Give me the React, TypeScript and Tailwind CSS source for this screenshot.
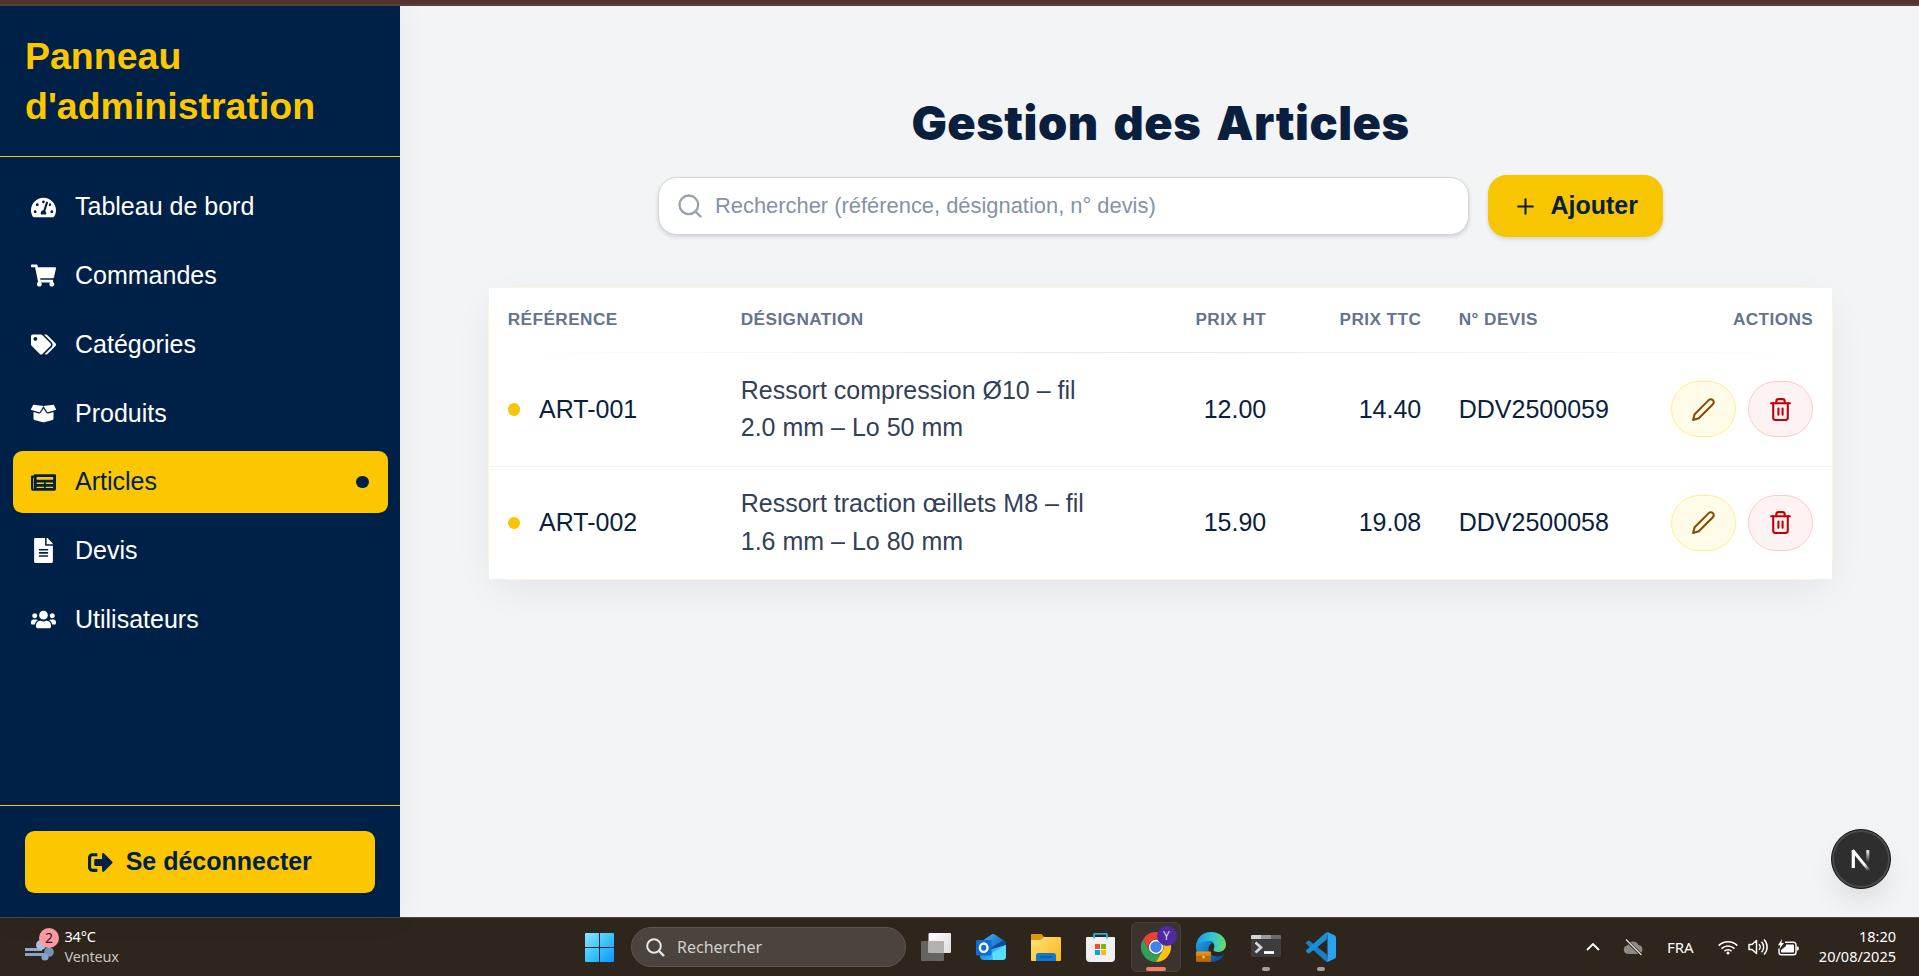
import type { ComponentType, ReactNode } from "react";
import {
  FaBoxOpen,
  FaFileAlt,
  FaNewspaper,
  FaShoppingCart,
  FaSignOutAlt,
  FaTachometerAlt,
  FaTags,
  FaUsers,
} from "react-icons/fa";
import { FiEdit2, FiPlus, FiSearch, FiTrash2 } from "react-icons/fi";

type NavItem = { label: string; icon: ComponentType<{ className?: string }>; active?: boolean };

const navItems: NavItem[] = [
  { label: "Tableau de bord", icon: FaTachometerAlt },
  { label: "Commandes", icon: FaShoppingCart },
  { label: "Catégories", icon: FaTags },
  { label: "Produits", icon: FaBoxOpen },
  { label: "Articles", icon: FaNewspaper, active: true },
  { label: "Devis", icon: FaFileAlt },
  { label: "Utilisateurs", icon: FaUsers },
];

const articles = [
  {
    ref: "ART-001",
    designation: "Ressort compression Ø10 – fil 2.0 mm – Lo 50 mm",
    ht: "12.00",
    ttc: "14.40",
    devis: "DDV2500059",
  },
  {
    ref: "ART-002",
    designation: "Ressort traction œillets M8 – fil 1.6 mm – Lo 80 mm",
    ht: "15.90",
    ttc: "19.08",
    devis: "DDV2500058",
  },
];

function Sidebar() {
  return (
    <aside className="z-10 flex w-[400px] shrink-0 flex-col bg-[#002147] text-white shadow-[0_0_30px_rgba(0,0,0,0.06)]">
      <div className="border-b border-[#fdc700] p-[25px]">
        <h1 className="text-[37.5px] leading-[50px] font-bold text-[#fdc700]">
          Panneau d'administration
        </h1>
      </div>
      <nav className="flex flex-1 flex-col gap-[6.25px] px-[12.5px] pt-[18.75px]">
        {navItems.map(({ label, icon: Icon, active }) => (
          <a
            key={label}
            className={
              active
                ? "flex h-[62.5px] items-center rounded-[9.4px] bg-[#fdc700] px-[18.75px] text-[#002147]"
                : "flex h-[62.5px] items-center rounded-[9.4px] px-[18.75px] text-white"
            }
          >
            <Icon className="size-[25px]" />
            <span className="ml-[18.75px] text-[25px] leading-[37.5px]">{label}</span>
            {active && <span className="ml-auto size-[12.5px] rounded-full bg-[#002147]" />}
          </a>
        ))}
      </nav>
      <div className="border-t border-[#fdc700] px-[25px] pt-[25px] pb-[24px]">
        <button className="flex h-[62px] w-full items-center justify-center gap-[12.5px] rounded-[9.4px] bg-[#fdc700] text-[25px] font-bold text-[#002147]">
          <FaSignOutAlt className="size-[25px]" />
          Se déconnecter
        </button>
      </div>
    </aside>
  );
}

function Toolbar() {
  return (
    <div className="flex items-center justify-center gap-[19px]">
      <div className="flex h-[58px] w-[811px] items-center rounded-[18.75px] border border-[#d1d5dc] bg-white pl-[17px] shadow-[0_2px_4px_rgba(0,0,0,0.14)]">
        <FiSearch className="size-[28px] text-[#99a1af]" />
        <span className="ml-[11px] text-[21.9px] text-[#8592a6]">
          Rechercher (référence, désignation, n° devis)
        </span>
      </div>
      <button className="flex h-[62px] w-[175px] items-center gap-[12.5px] rounded-[18.75px] bg-[#f7c600] pl-[25px] text-[25px] font-bold text-[#0a1f3d] shadow-[0_2px_4px_rgba(0,0,0,0.14)]">
        <FiPlus className="size-[25px]" />
        Ajouter
      </button>
    </div>
  );
}

function ArticlesTable() {
  const th = "px-[18.75px] align-top pt-[18px]";
  const td = "px-[18.75px] h-[113px] text-[25px]";
  return (
    <div className="mx-auto w-[1345px] rounded-[25px] border border-[#fef6d6] shadow-[0_12px_36px_rgba(0,0,0,0.06)]">
      <div className="bg-white">
        <table className="w-full table-fixed border-collapse text-[#0a1f3d]">
          <colgroup>
            <col className="w-[233px]" />
            <col className="w-[400px]" />
            <col className="w-[163px]" />
            <col className="w-[155px]" />
            <col className="w-[210px]" />
            <col />
          </colgroup>
          <thead>
            <tr className="h-[65px] bg-[linear-gradient(to_right,transparent,#e5e7eb,transparent)] bg-[length:100%_1px] bg-[position:0_64px] bg-no-repeat text-left text-[17.2px] leading-[26px] font-bold tracking-[0.43px] text-[#62748e] uppercase">
              <th className={th}>Référence</th>
              <th className={th}>Désignation</th>
              <th className="px-[18.75px] pt-[18px] text-right align-top">Prix HT</th>
              <th className="px-[18.75px] pt-[18px] text-right align-top">Prix TTC</th>
              <th className={th}>N° Devis</th>
              <th className="px-[18.75px] pt-[18px] text-right align-top">Actions</th>
            </tr>
          </thead>
          <tbody>
            {articles.map((a, i) => (
              <tr key={a.ref} className={i > 0 ? "border-t border-[#f3f4f6]" : ""}>
                <td className={td}>
                  <div className="flex items-center gap-[18.75px]">
                    <span className="size-[12.5px] rounded-full bg-[#f7c600]" />
                    {a.ref}
                  </div>
                </td>
                <td className="px-[18.75px] text-[25px] leading-[37.5px] text-[#314158]">
                  {a.designation}
                </td>
                <td className="px-[18.75px] text-right text-[25px]">{a.ht}</td>
                <td className="px-[18.75px] text-right text-[25px]">{a.ttc}</td>
                <td className={td}>{a.devis}</td>
                <td className="pr-[18.75px]">
                  <div className="flex justify-end gap-[12px]">
                    <button className="flex h-[56px] w-[65px] items-center justify-center rounded-full border border-[#fff085] bg-[#fefce8] text-[#894b00]">
                      <FiEdit2 className="size-[25px]" />
                    </button>
                    <button className="flex h-[56px] w-[65px] items-center justify-center rounded-full border border-[#ffc9c9] bg-[#fef2f2] text-[#c10007]">
                      <FiTrash2 className="size-[25px]" />
                    </button>
                  </div>
                </td>
              </tr>
            ))}
          </tbody>
        </table>
      </div>
    </div>
  );
}

function DevBadge() {
  return (
    <div className="absolute right-[28px] bottom-[28px] flex size-[60px] items-center justify-center rounded-full border border-[#171717] bg-[#2e2e2e] shadow-[inset_0_0_0_2px_#4a4a4a,0_16px_32px_-8px_rgba(0,0,0,0.14)]">
      <svg viewBox="0 0 24 26" className="h-[26px] w-[24px]" fill="none">
        <defs>
          <linearGradient id="nDiag" x1="10" y1="12" x2="20" y2="25" gradientUnits="userSpaceOnUse">
            <stop offset="0.5" stopColor="#fff" />
            <stop offset="1" stopColor="#fff" stopOpacity="0" />
          </linearGradient>
          <linearGradient id="nStem" x1="18" y1="4" x2="18" y2="16" gradientUnits="userSpaceOnUse">
            <stop stopColor="#fff" />
            <stop offset="1" stopColor="#fff" stopOpacity="0" />
          </linearGradient>
        </defs>
        <path d="M4.3 22V4.2" stroke="#fff" strokeWidth="3.2" />
        <path d="M3.6 4.2 20.2 24.6" stroke="url(#nDiag)" strokeWidth="3" />
        <path d="M18.8 4.2V16" stroke="url(#nStem)" strokeWidth="3" />
      </svg>
    </div>
  );
}

function AppSlot({ children, running }: { children: ReactNode; running?: boolean }) {
  return (
    <div className="relative flex h-[50px] w-[55px] items-center justify-center">
      {children}
      {running && <span className="absolute bottom-[1px] h-[4px] w-[8px] rounded-full bg-[#a39e99]" />}
    </div>
  );
}

function WindowsLogo() {
  return (
    <svg viewBox="0 0 29 29" className="size-[29px]">
      <defs>
        <linearGradient id="win" x1="0" y1="0" x2="29" y2="29" gradientUnits="userSpaceOnUse">
          <stop stopColor="#8fe3ff" />
          <stop offset="0.5" stopColor="#3cc4ff" />
          <stop offset="1" stopColor="#0a93ff" />
        </linearGradient>
      </defs>
      <path
        fill="url(#win)"
        d="M1 0h13v14H0V1a1 1 0 0 1 1-1ZM15 0h13a1 1 0 0 1 1 1v13H15ZM0 15h14v14H1a1 1 0 0 1-1-1ZM15 15h14v13a1 1 0 0 1-1 1H15Z"
      />
    </svg>
  );
}

function TaskViewIcon() {
  return (
    <svg viewBox="0 0 30 28" className="h-[28px] w-[30px]">
      <defs>
        <linearGradient id="tvFront" x1="8" y1="0" x2="30" y2="20" gradientUnits="userSpaceOnUse">
          <stop stopColor="#fff" />
          <stop offset="1" stopColor="#dcdcdc" />
        </linearGradient>
      </defs>
      <rect x="0" y="8" width="23" height="20" rx="1" fill="#666462" />
      <rect x="7.5" y="0" width="22.5" height="20" rx="1" fill="url(#tvFront)" />
      <rect x="7.5" y="8" width="15.5" height="12" fill="#b3b2b1" />
    </svg>
  );
}

function OutlookIcon() {
  return (
    <svg viewBox="0 0 30 28" className="h-[28px] w-[30px]">
      <defs>
        <linearGradient id="olFlap" x1="6" y1="2" x2="26" y2="20" gradientUnits="userSpaceOnUse">
          <stop stopColor="#42b5f5" />
          <stop offset="1" stopColor="#0a58b8" />
        </linearGradient>
        <linearGradient id="olBody" x1="6" y1="16" x2="30" y2="27" gradientUnits="userSpaceOnUse">
          <stop stopColor="#1c8ce8" />
          <stop offset="1" stopColor="#52dcff" />
        </linearGradient>
      </defs>
      <path fill="url(#olFlap)" d="M4 9.5 15.5 1.4a3 3 0 0 1 3.300 0L28.500 8a3 3 0 0 1 1.500 2.600V18L8 20H4Z" />
      <path fill="#0b4aa0" d="m13 16 15-9 2 3v4L14 22Z" />
      <path fill="url(#olBody)" d="m4 20 12-4 14-4v11a4 4 0 0 1-4 4H8a4 4 0 0 1-4-4Z" />
      <path fill="#55dfff" d="M16 20 30 12v11a4 4 0 0 1-4 4h-9Z" />
      <rect x="0" y="7" width="15.500" height="15.500" rx="1.500" fill="#0f6fd0" />
      <ellipse cx="7.700" cy="14.700" rx="3.800" ry="4.200" fill="none" stroke="#fff" strokeWidth="2.300" />
    </svg>
  );
}

function ExplorerIcon() {
  return (
    <svg viewBox="0 0 30 27" className="h-[27px] w-[30px]">
      <defs>
        <linearGradient id="fold" x1="4" y1="4" x2="28" y2="27" gradientUnits="userSpaceOnUse">
          <stop stopColor="#ffdf70" />
          <stop offset="1" stopColor="#fbb91b" />
        </linearGradient>
      </defs>
      <path fill="#dc9a0a" d="M1 0h9.500l3 3.500H29V8H0V1a1 1 0 0 1 1-1Z" />
      <path fill="url(#fold)" d="M0 6h9.500L13 3h16a1 1 0 0 1 1 1v22a1 1 0 0 1-1 1H1a1 1 0 0 1-1-1Z" />
      <path fill="#1079cd" d="M5 27v-5.500A2.500 2.500 0 0 1 7.500 19h15a2.500 2.500 0 0 1 2.500 2.500V27Z" />
      <path stroke="#07508f" strokeWidth="1.200" d="M8.500 23h13" />
    </svg>
  );
}

function StoreIcon() {
  return (
    <svg viewBox="0 0 29 29" className="size-[29px]">
      <path d="M8 5V1.800a1 1 0 0 1 1-1h11a1 1 0 0 1 1 1V5" fill="none" stroke="#25aee6" strokeWidth="1.800" />
      <path fill="#f0f0f0" d="M1 4h27a1 1 0 0 1 1 1v20a4 4 0 0 1-4 4H4a4 4 0 0 1-4-4V5a1 1 0 0 1 1-1Z" />
      <path d="M8 5.500V2M21 5.500V2" stroke="#25aee6" strokeWidth="1.800" />
      <path fill="#f25022" d="M9 11h5v5H9z" />
      <path fill="#7fba00" d="M15 11h5v5h-5z" />
      <path fill="#00a4ef" d="M9 17h5v5H9z" />
      <path fill="#ffb900" d="M15 17h5v5h-5z" />
    </svg>
  );
}

function ChromeIcon() {
  return (
    <div className="relative flex size-[50px] shrink-0 items-center justify-center rounded-[6px] border border-[#48413b] bg-[#3b332d]">
      <svg viewBox="0 0 48 48" className="size-[30px]">
        <path fill="#ea4335" d="M3.200 12A24 24 0 0 1 44.800 12H24a12 12 0 0 0-10.400 18Z" />
        <path fill="#34a053" d="M3.200 12A24 24 0 0 0 24 48L34.400 30A12 12 0 0 1 13.600 30Z" />
        <path fill="#fbc116" d="M44.800 12A24 24 0 0 1 24 48L34.400 30A12 12 0 0 0 24 12Z" />
        <circle cx="24" cy="24" r="11.500" fill="#fff" />
        <circle cx="24" cy="24" r="9.200" fill="#3f82f0" />
      </svg>
      <span className="absolute top-[3px] left-[25px] flex size-[20px] items-center justify-center rounded-full bg-[#5129a3] text-[12px] text-[#ddd6ec]">
        Y
      </span>
      <span className="absolute bottom-[0px] h-[4px] w-[20px] rounded-full bg-[#f47c64]" />
    </div>
  );
}

function EdgeIcon() {
  return (
    <svg viewBox="0 0 30 30" className="size-[30px]">
      <defs>
        <linearGradient id="edgeTop" x1="0" y1="12" x2="30" y2="14" gradientUnits="userSpaceOnUse">
          <stop stopColor="#1f95dc" />
          <stop offset="0.500" stopColor="#2fc2df" />
          <stop offset="1" stopColor="#6be05f" />
        </linearGradient>
        <linearGradient id="edgeBody" x1="0" y1="10" x2="20" y2="30" gradientUnits="userSpaceOnUse">
          <stop stopColor="#1c9fe8" />
          <stop offset="1" stopColor="#0d4f9e" />
        </linearGradient>
        <linearGradient id="brief" x1="0" y1="19" x2="0" y2="30" gradientUnits="userSpaceOnUse">
          <stop stopColor="#f59a14" />
          <stop offset="1" stopColor="#b05c04" />
        </linearGradient>
      </defs>
      <path fill="url(#edgeBody)" d="M0 15C2 7 12 7 16 11c-5 3-5 11 2 13 4 1.200 8 0 10.500-2C26 27 21 30 15 30 6 30 0 23 0 15Z" />
      <path fill="url(#edgeTop)" d="M0 15C0 6 6.500 0 15 0c9 0 15 6 15 12.500 0 5-4 7.500-8 7.500-3 0-5-1-4.500-2.500 2-3 1-8.500-5-8.500C6 9 1.500 12 0 15Z" />
      <rect x="0" y="19.500" width="15" height="10.500" rx="1" fill="url(#brief)" />
      <path d="M0 25h15" stroke="#8b4600" strokeWidth="0.700" />
      <circle cx="7.500" cy="25" r="1.300" fill="#ffd34a" />
    </svg>
  );
}

function TerminalIcon() {
  return (
    <svg viewBox="0 0 30 22" className="mb-[2px] h-[22px] w-[30px]">
      <rect width="30" height="22" rx="1.500" fill="#3c3c3c" />
      <path fill="#d4d4d4" d="M1 0h9v4H0V1a1 1 0 0 1 1-1Z" />
      <path fill="#9a9a9a" d="M10 0h10v4H10z" />
      <path fill="#6b6b6b" d="M20 0h9a1 1 0 0 1 1 1v3H20z" />
      <path d="m4.500 7.500 5.500 5-5.500 5" fill="none" stroke="#d9d9d9" strokeWidth="2.600" />
      <path d="M13 17.500h10" stroke="#fff" strokeWidth="2.800" />
    </svg>
  );
}

function VsCodeIcon() {
  return (
    <svg viewBox="0 0 30 30" className="size-[30px]">
      <path fill="#1c7fc4" d="m20.500 22.200-17-13.500a1.200 1.200 0 0 0-1.500 0L.4 10.200a1.200 1.200 0 0 0 0 1.800L20 29.500l2-1Z" />
      <path fill="#1a8fd8" d="m20.500 7.800-17 13.500a1.200 1.200 0 0 1-1.500 0L.4 19.800a1.200 1.200 0 0 1 0-1.800L20 .5l2 1Z" />
      <path fill="#2aa3ee" d="m22 29.800 6.500-3A2.500 2.500 0 0 0 30 24.500v-19a2.500 2.500 0 0 0-1.500-2.300L22 .2a2 2 0 0 0-2.200.3c.7-.5 1.700 0 1.700 1v27c0 1-1 1.500-1.700 1A2 2 0 0 0 22 29.800Z" />
    </svg>
  );
}

function WeatherWidget() {
  return (
    <div className="flex items-center pb-[3px]">
      <div className="relative h-[34px] w-[39.500px]">
        <svg viewBox="0 0 40 34" className="h-[34px] w-[40px]" fill="none">
          <path d="M0 20.500h17" stroke="#8ea9cd" strokeWidth="3" />
          <path d="M0 25.500h22" stroke="#87a3c9" strokeWidth="3" />
          <circle cx="16" cy="16" r="5" fill="#a9bfda" />
          <circle cx="24" cy="23" r="4.800" fill="#7292ba" />
          <circle cx="20" cy="28" r="3.600" fill="#86a3c8" />
        </svg>
        <span className="absolute top-[-1px] left-[14px] flex size-[20px] items-center justify-center rounded-full bg-[#ff99a4] text-[14px] text-[#2a1416]">
          2
        </span>
      </div>
      <div className="text-[14.500px] leading-[20px] tracking-[-0.2px]">
        <div className="text-white">34°C</div>
        <div className="text-[#c8c4c0]">Venteux</div>
      </div>
    </div>
  );
}

function SystemTray() {
  return (
    <div className="flex items-center text-white">
      <svg viewBox="0 0 14 8" className="h-[8px] w-[14px]" fill="none" stroke="#fff" strokeWidth="1.800">
        <path d="m1 7 6-6 6 6" />
      </svg>
      <svg viewBox="0 0 21 17" className="ml-[23px] h-[17px] w-[21px]">
        <path fill="#8e8a86" d="M5 15a5 4.500 0 0 1-.5-8.800A6 6 0 0 1 15.500 6 4.600 4.600 0 0 1 16 15Z" />
        <path d="m3 1 15.500 15" stroke="#2e251d" strokeWidth="3" />
        <path d="m3 .5 15.500 15.500" stroke="#e5e3e1" strokeWidth="1.300" />
      </svg>
      <span className="ml-[23px] w-[27px] text-[15px]">FRA</span>
      <svg viewBox="0 0 20 15" className="ml-[24px] h-[15px] w-[20px]" fill="none" stroke="#fff" strokeWidth="1.600">
        <path d="M.7 5.600a13.200 13.200 0 0 1 18.600 0M3.600 8.600a9 9 0 0 1 12.800 0M6.400 11.300a5.100 5.100 0 0 1 7.200 0" />
        <circle cx="10" cy="13" r="1.500" fill="#fff" stroke="none" />
      </svg>
      <svg viewBox="0 0 20 18" className="ml-[10px] h-[18px] w-[20px]" fill="none" stroke="#fff" strokeWidth="1.500">
        <path d="M1 6.500h3L8.500 2.500v13L4 11.500H1Z" strokeLinejoin="round" />
        <path d="M11 6.200a4 4 0 0 1 0 5.600M13.500 3.800a7.300 7.300 0 0 1 0 10.400M16 1.500a10.600 10.600 0 0 1 0 15" />
      </svg>
      <svg viewBox="0 0 21 17" className="ml-[10px] h-[17px] w-[21px]">
        <path d="M7 3.200h8.500a2.500 2.500 0 0 1 2.500 2.500v7.600a2.500 2.500 0 0 1-2.500 2.500H3.500A2.500 2.500 0 0 1 1 13.300V9.500" fill="none" stroke="#fff" strokeWidth="1.400" />
        <path fill="#fff" d="M8 5.500h7a1 1 0 0 1 1 1v6a1 1 0 0 1-1 1H4a1 1 0 0 1-1-1V11l5-4ZM18.700 7.500h1a1 1 0 0 1 1 1v2a1 1 0 0 1-1 1h-1ZM4 0 0 6.200h2.200L1.500 10 6 4H3.500Z" />
      </svg>
      <div className="ml-[11px] w-[86px] pb-[2px] text-right text-[14.500px] leading-[20px] whitespace-nowrap">
        <div>18:20</div>
        <div>20/08/2025</div>
      </div>
    </div>
  );
}

function Taskbar() {
  return (
    <footer className="flex h-[59px] shrink-0 items-center border-t border-[#4c4742] bg-[#2e251d] font-['Noto_Sans','Open_Sans',sans-serif]">
      <div className="w-[585px] pl-[25px]">
        <WeatherWidget />
      </div>
      <WindowsLogo />
      <div className="ml-[17px] flex h-[40px] w-[275px] items-center rounded-full border border-[#5d564f] bg-[#4b443e] pl-[14px]">
        <svg viewBox="0 0 19 19" className="size-[19px]" fill="none" stroke="#e6e8ea" strokeWidth="2">
          <circle cx="8" cy="8" r="6.800" />
          <path d="m13 13 5 5" strokeWidth="2.400" />
        </svg>
        <span className="ml-[12px] text-[16px] text-[#d2cfcc]">Rechercher</span>
      </div>
      <div className="ml-[2px] flex items-center">
        <AppSlot><TaskViewIcon /></AppSlot>
        <AppSlot><OutlookIcon /></AppSlot>
        <AppSlot><ExplorerIcon /></AppSlot>
        <AppSlot><StoreIcon /></AppSlot>
        <AppSlot><ChromeIcon /></AppSlot>
        <AppSlot><EdgeIcon /></AppSlot>
        <AppSlot running><TerminalIcon /></AppSlot>
        <AppSlot running><VsCodeIcon /></AppSlot>
      </div>
      <div className="mr-[23px] ml-auto">
        <SystemTray />
      </div>
    </footer>
  );
}

export default function App() {
  return (
    <div className="flex h-[976px] w-[1919px] flex-col overflow-hidden font-['Liberation_Sans',Arial,sans-serif]">
      <div className="h-[6px] shrink-0 border-b-2 border-[#54433f] bg-[#55332f]" />
      <div className="flex min-h-0 flex-1">
        <Sidebar />
        <main className="relative flex-1 overflow-hidden bg-[#f3f4f6] pt-[89px] pl-[2px]">
          <h2 className="text-center font-['Inter','Liberation_Sans',sans-serif] text-[46.9px] leading-[56px] font-black tracking-[0.5px] text-[#0a1f3d] [word-spacing:5px]">
            Gestion des Articles
          </h2>
          <div className="mt-[24px] mb-[50px]">
            <Toolbar />
          </div>
          <ArticlesTable />
          <DevBadge />
        </main>
      </div>
      <Taskbar />
    </div>
  );
}
